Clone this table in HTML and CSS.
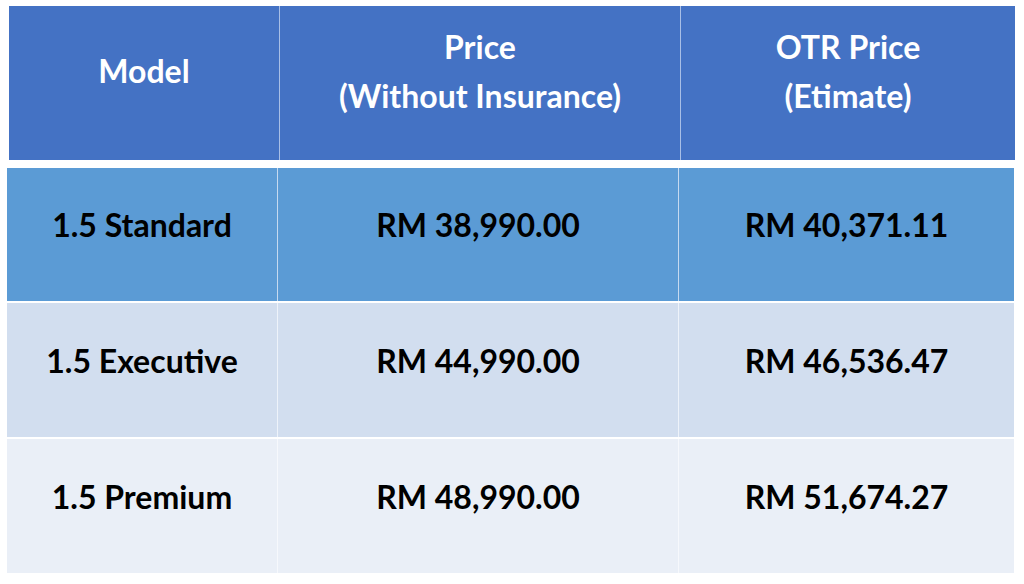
FILE: index.html
```html
<!DOCTYPE html>
<html lang="en">
<head>
<meta charset="utf-8">
<title>Price list</title>
<link rel="stylesheet" href="styles.css">
</head>
<body>
<div class="page">
  <div class="head">
    <div class="hcell">Model</div>
    <div class="hcell">Price<br>(Without Insurance)</div>
    <div class="hcell">OTR Price<br>(Etimate)</div>
  </div>
  <div class="body">
    <div class="row row-1">
      <div class="cell">1.5 Standard</div>
      <div class="cell">RM 38,990.00</div>
      <div class="cell">RM 40,371.11</div>
    </div>
    <div class="row row-2">
      <div class="cell">1.5 Executive</div>
      <div class="cell">RM 44,990.00</div>
      <div class="cell">RM 46,536.47</div>
    </div>
    <div class="row row-3">
      <div class="cell">1.5 Premium</div>
      <div class="cell">RM 48,990.00</div>
      <div class="cell">RM 51,674.27</div>
    </div>
  </div>
</div>
</body>
</html>
```
FILE: styles.css
```css
html, body {
  margin: 0;
  padding: 0;
  background: #ffffff;
}
.page {
  width: 1024px;
  height: 584px;
  overflow: hidden;
  font-family: Lato, "Open Sans", sans-serif;
  font-weight: 700;
}
.head {
  margin: 6px 0 0 9px;
  width: 1006px;
  height: 154px;
  display: grid;
  grid-template-columns: 270px 400px 1fr;
  column-gap: 1px;
  background: #a9bfe6;
}
.hcell {
  background: #4472c4;
  color: #ffffff;
  font-size: 32px;
  line-height: 49px;
  text-align: center;
  display: flex;
  align-items: center;
  justify-content: center;
  padding-bottom: 25px;
  box-sizing: border-box;
}
.body {
  margin: 8px 0 0 7px;
  width: 1007px;
  display: flex;
  flex-direction: column;
  row-gap: 2px;
  background: #ffffff;
}
.row {
  display: grid;
  grid-template-columns: 270px 400px 1fr;
  column-gap: 1px;
  height: 133px;
}
.row-2, .row-3 { height: 134px; }
.cell {
  display: flex;
  align-items: center;
  justify-content: center;
  padding-bottom: 20px;
  box-sizing: border-box;
  color: #000000;
  font-size: 32px;
}
.row-1 { background: #c6daf0; }
.row-1 .cell { background: #5b9bd5; }
.row-2 { background: #eef3fa; }
.row-2 .cell { background: #d2deef; }
.row-3 { background: #f6f8fc; }
.row-3 .cell { background: #eaeff7; }
```
